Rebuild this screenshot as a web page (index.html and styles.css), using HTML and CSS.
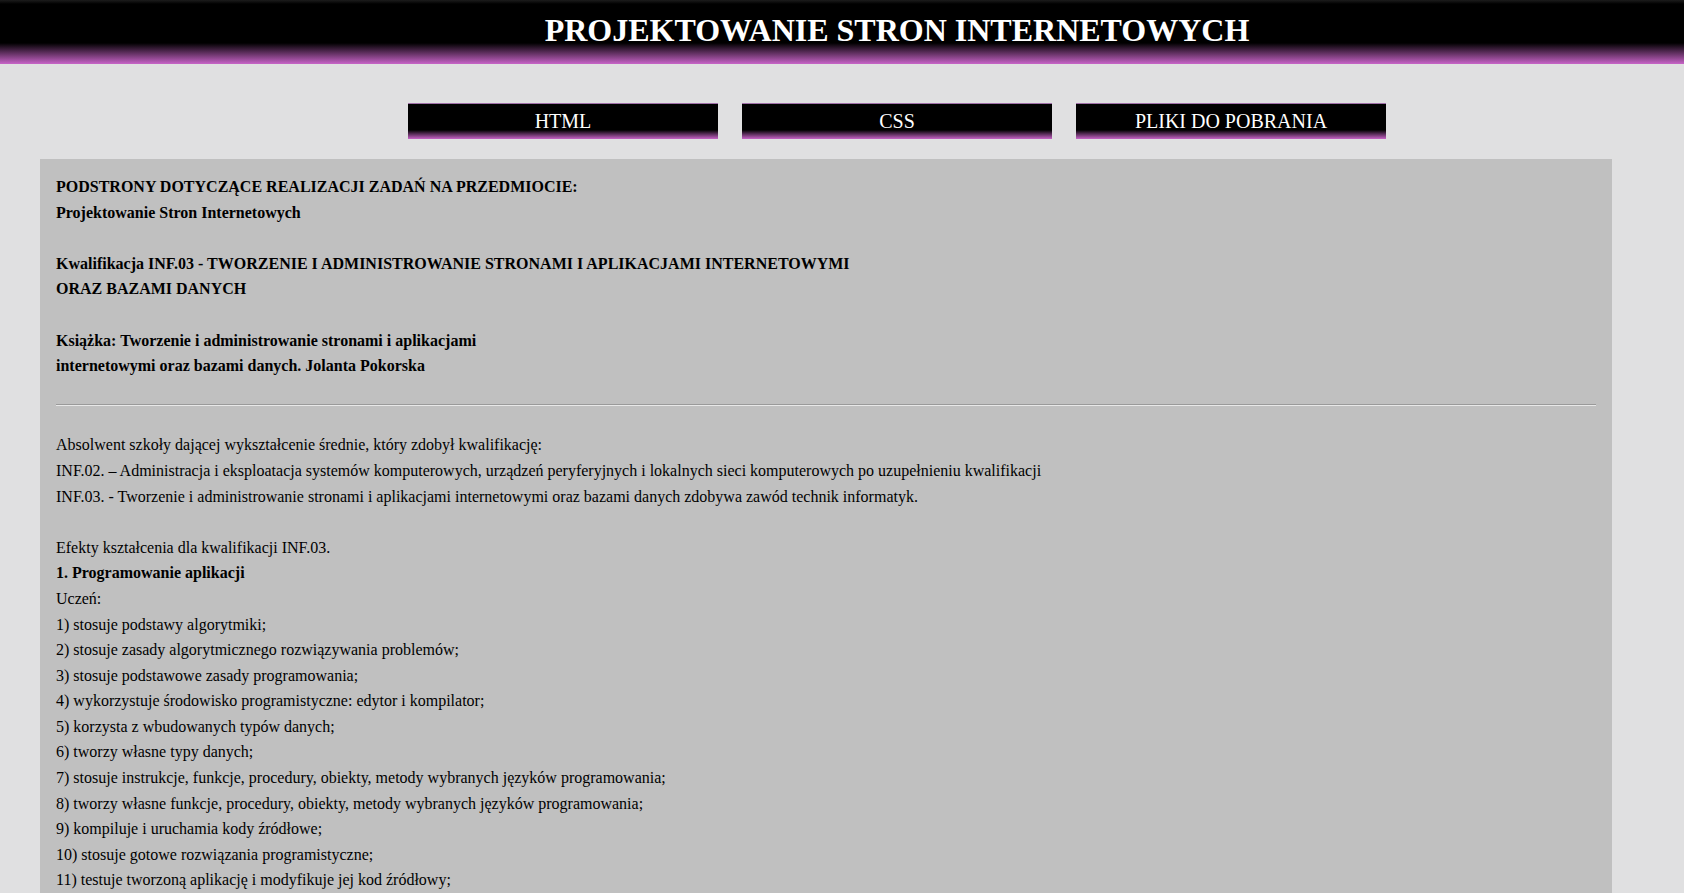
FILE: index.html
```html
<!DOCTYPE html>
<html lang="pl">
<head>
<meta charset="utf-8">
<title>Projektowanie Stron Internetowych</title>
<link rel="stylesheet" href="styles.css">
</head>
<body>
<header class="top">
  <h1 class="title">PROJEKTOWANIE STRON INTERNETOWYCH</h1>
</header>
<nav class="menu">
  <a class="btn" href="#">HTML</a>
  <a class="btn" href="#">CSS</a>
  <a class="btn" href="#">PLIKI DO POBRANIA</a>
</nav>
<main class="content">
  <div class="intro">
    <p class="group">PODSTRONY DOTYCZĄCE REALIZACJI ZADAŃ NA PRZEDMIOCIE:<br>Projektowanie Stron Internetowych</p>
    <p class="group">Kwalifikacja INF.03 - TWORZENIE I ADMINISTROWANIE STRONAMI I APLIKACJAMI INTERNETOWYMI<br>ORAZ BAZAMI DANYCH</p>
    <p class="group">Książka: Tworzenie i administrowanie stronami i aplikacjami<br>internetowymi oraz bazami danych. Jolanta Pokorska</p>
  </div>
  <hr class="rule">
  <div class="body-text">
    <p class="group">Absolwent szkoły dającej wykształcenie średnie, który zdobył kwalifikację:<br>INF.02. – Administracja i eksploatacja systemów komputerowych, urządzeń peryferyjnych i lokalnych sieci komputerowych po uzupełnieniu kwalifikacji<br>INF.03. - Tworzenie i administrowanie stronami i aplikacjami internetowymi oraz bazami danych zdobywa zawód technik informatyk.</p>
    <p class="group">Efekty kształcenia dla kwalifikacji INF.03.<br><b>1. Programowanie aplikacji</b><br>Uczeń:<br>1) stosuje podstawy algorytmiki;<br>2) stosuje zasady algorytmicznego rozwiązywania problemów;<br>3) stosuje podstawowe zasady programowania;<br>4) wykorzystuje środowisko programistyczne: edytor i kompilator;<br>5) korzysta z wbudowanych typów danych;<br>6) tworzy własne typy danych;<br>7) stosuje instrukcje, funkcje, procedury, obiekty, metody wybranych języków programowania;<br>8) tworzy własne funkcje, procedury, obiekty, metody wybranych języków programowania;<br>9) kompiluje i uruchamia kody źródłowe;<br>10) stosuje gotowe rozwiązania programistyczne;<br>11) testuje tworzoną aplikację i modyfikuje jej kod źródłowy;</p>
  </div>
</main>
</body>
</html>
```
FILE: styles.css
```css
html, body {
  margin: 0;
  padding: 0;
}
body {
  background: #e0e0e1;
  font-family: "Liberation Serif", "Times New Roman", serif;
  color: #000;
  height: 893px;
  overflow: hidden;
}
.top {
  height: 64px;
  background: linear-gradient(to bottom, #1c1c1c 0px, #000 4px, #000 43px, #c864c8 64px);
  padding-left: 110px;
  text-align: center;
}
.title {
  margin: 0;
  font-size: 32px;
  font-weight: bold;
  line-height: 60px;
  color: #fff;
}
.menu {
  display: flex;
  justify-content: center;
  gap: 24px;
  padding-left: 110px;
  margin-top: 39px;
}
.btn {
  display: block;
  width: 310px;
  height: 36px;
  line-height: 35px;
  box-sizing: border-box;
  border-top: 1px solid #a070a8;
  background: linear-gradient(to bottom, #000 0px, #000 26px, #c864c8 35px);
  color: #fff;
  text-decoration: none;
  text-align: center;
  font-size: 20px;
}
.content {
  margin: 20px 0 0 40px;
  width: 1572px;
  box-sizing: border-box;
  background: #c0c0c0;
  padding: 15px 16px 40px;
  font-size: 16px;
  line-height: 25.6px;
}
.intro .group {
  font-weight: bold;
}
.group {
  margin: 0 0 25.6px;
}
.rule {
  margin: 0 0 26px;
  border: 0;
  border-top: 1px solid #9a9a9a;
  border-bottom: 1px solid #e8e8e8;
  height: 0;
}
```
